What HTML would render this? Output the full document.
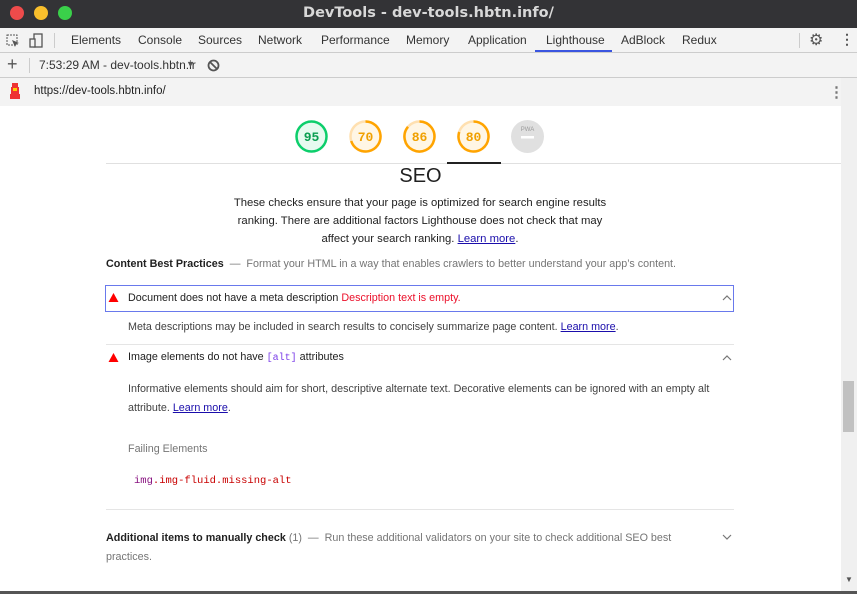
<!DOCTYPE html>
<html><head><style>
*{margin:0;padding:0;box-sizing:border-box}
body{width:857px;height:594px;overflow:hidden;font-family:"Liberation Sans",sans-serif;background:#fff;position:relative}
.title{position:absolute;left:0;top:0;width:857px;height:28px;background:#333336;color:#d8d8d8;font-family:"DejaVu Sans",sans-serif;font-weight:bold;font-size:14.5px;text-align:center;line-height:27px}
.dot{position:absolute;top:6px;width:14px;height:14px;border-radius:50%}
.tabs{position:absolute;top:28px;left:0;width:857px;height:25px;background:#f3f3f3;border-bottom:1px solid #ccc;font-family:"Liberation Sans",sans-serif;font-size:12px;color:#333}
.tabs span{position:absolute;top:5px}
.bar2{position:absolute;top:53px;left:0;width:857px;height:25px;background:#f3f3f3;border-bottom:1px solid #ccc;font-family:"Liberation Sans",sans-serif;font-size:12px;color:#333}
.bar3{position:absolute;top:78px;left:0;width:841px;height:28px;background:#f3f3f3;font-size:12px;color:#222}
.scroll{position:absolute;left:841px;top:78px;width:16px;height:513px;background:#f0f0f0}
.abs{position:absolute}
.g{position:absolute;top:120px;width:33px;height:33px}
.t{font-size:10.75px;color:#212121}
.m{font-family:"Liberation Mono",monospace}
a{color:#1a0dab;text-decoration:underline}
.gray{color:#757575}
.hr{position:absolute;left:106px;width:628px;height:1px;background:#e5e5e5}
</style></head><body>
<div class="title">DevTools - dev-tools.hbtn.info/</div>
<div class="dot" style="left:10px;background:#ee4b4b"></div>
<div class="dot" style="left:34px;background:#f9bf2c"></div>
<div class="dot" style="left:58px;background:#3ad04a"></div>
<div class="tabs">
<svg class="abs" style="left:6px;top:6px" width="14" height="14"><rect x="1" y="1" width="10" height="10" fill="none" stroke="#555" stroke-dasharray="2,1"/><path d="M6 6l7 3-3 1-1 3z" fill="#555"/></svg>
<svg class="abs" style="left:29px;top:5px" width="14" height="15"><rect x="5" y="1" width="8" height="13" fill="none" stroke="#555" stroke-width="1.3"/><rect x="1" y="6" width="5" height="8" fill="#f3f3f3" stroke="#555" stroke-width="1.3"/></svg>
<div class="abs" style="left:54px;top:5px;width:1px;height:15px;background:#ccc"></div>
<span style="left:71px">Elements</span><span style="left:138px">Console</span><span style="left:198px">Sources</span><span style="left:258px">Network</span><span style="left:321px">Performance</span><span style="left:406px">Memory</span><span style="left:468px">Application</span><span style="left:546px">Lighthouse</span><span style="left:621px">AdBlock</span><span style="left:682px">Redux</span>
<div class="abs" style="left:535px;top:22px;width:77px;height:2px;background:#3a55e0"></div>
<div class="abs" style="left:799px;top:5px;width:1px;height:15px;background:#ccc"></div>
<span style="left:809px;top:2px;font-size:16px;color:#555">⚙</span>
<span style="left:840px;top:3px;font-size:14px;color:#555;font-weight:bold">⋮</span>
</div>
<div class="bar2">
<span class="abs" style="left:7px;top:1px;font-size:18px;color:#555">+</span>
<div class="abs" style="left:29px;top:5px;width:1px;height:15px;background:#ccc"></div>
<span class="abs" style="left:39px;top:5px">7:53:29 AM - dev-tools.hbtn.ir</span>
<span class="abs" style="left:186px;top:6px;font-size:9px;color:#555">▼</span>
<svg class="abs" style="left:207px;top:6px" width="13" height="13"><circle cx="6.5" cy="6.5" r="5" fill="none" stroke="#555" stroke-width="1.8"/><path d="M3 3l7 7" stroke="#555" stroke-width="1.8"/></svg>
</div>
<div class="bar3">
<svg class="abs" style="left:9px;top:5px" width="12" height="17"><rect x="3" y="0" width="6" height="4" fill="#e33"/><rect x="2" y="4" width="8" height="7" fill="#e33"/><rect x="4" y="5" width="4" height="3" fill="#fc0"/><rect x="1" y="11" width="10" height="5" fill="#e33"/></svg>
<span class="abs" style="left:34px;top:7px;font-size:11.5px">https://dev-tools.hbtn.info/</span>
<span class="abs" style="left:829px;top:5px;font-size:15px;color:#777;font-weight:bold">⋮</span>
</div>
<div class="scroll"><div class="abs" style="left:2px;top:303px;width:11px;height:51px;background:#c1c1c1"></div><span class="abs" style="left:4px;top:497px;font-size:8px;color:#555">▼</span></div>
<div class="abs" style="left:0;top:591px;width:857px;height:3px;background:#555"></div>

<svg class="g" style="left:295px"><circle cx="16.5" cy="16.5" r="15" fill="#e6faef" stroke="#0cce6b" stroke-width="2.5"/><text x="16.5" y="21" text-anchor="middle" font-family="Liberation Mono" font-weight="bold" font-size="13" fill="#0a9e50">95</text></svg>
<svg class="g" style="left:349px"><circle cx="16.5" cy="16.5" r="15" fill="#fff6e5" stroke="#ffe0b0" stroke-width="2.5"/><path d="M16.5 1.5A15 15 0 1 1 2.2 21" fill="none" stroke="#ffa400" stroke-width="2.5"/><text x="16.5" y="21" text-anchor="middle" font-family="Liberation Mono" font-weight="bold" font-size="13" fill="#f0a000">70</text></svg>
<svg class="g" style="left:403px"><circle cx="16.5" cy="16.5" r="15" fill="#fff6e5" stroke="#ffe0b0" stroke-width="2.5"/><path d="M16.5 1.5A15 15 0 1 1 5 6.8" fill="none" stroke="#ffa400" stroke-width="2.5"/><text x="16.5" y="21" text-anchor="middle" font-family="Liberation Mono" font-weight="bold" font-size="13" fill="#f0a000">86</text></svg>
<svg class="g" style="left:457px"><circle cx="16.5" cy="16.5" r="15" fill="#fff6e5" stroke="#ffe0b0" stroke-width="2.5"/><path d="M16.5 1.5A15 15 0 1 1 2.2 12" fill="none" stroke="#ffa400" stroke-width="2.5"/><text x="16.5" y="21" text-anchor="middle" font-family="Liberation Mono" font-weight="bold" font-size="13" fill="#f0a000">80</text></svg>
<svg class="g" style="left:511px"><circle cx="16.5" cy="16.5" r="16.5" fill="#e0e0e0"/><text x="16.5" y="11" text-anchor="middle" font-size="6" fill="#999">PWA</text><rect x="10" y="16" width="13" height="2.5" fill="#fff"/></svg>
<div class="abs" style="left:106px;top:163px;width:735px;height:1px;background:#e0e0e0"></div>
<div class="abs" style="left:447px;top:162px;width:54px;height:2px;background:#212121"></div>

<div class="abs" style="left:0;top:165px;width:841px;text-align:center;font-size:20px;color:#212121">SEO</div>
<div class="abs t" style="left:230px;top:194px;width:380px;text-align:center;line-height:18px;font-size:11.3px">These checks ensure that your page is optimized for search engine results ranking. There are additional factors Lighthouse does not check that may affect your search ranking. <a>Learn more</a>.</div>

<div class="abs" style="left:106px;top:258px;font-size:10.75px"><b style="color:#212121">Content Best Practices</b> <span class="gray">&nbsp;— &nbsp;Format your HTML in a way that enables crawlers to better understand your app’s content.</span></div>

<div class="abs" style="left:105px;top:285px;width:629px;height:27px;border:1px solid #6979ec"></div>
<svg class="abs" style="left:108px;top:292px" width="11" height="11"><path d="M5.5 1L10.5 10H.5z" fill="#f00"/></svg>
<div class="abs t" style="left:128px;top:292px">Document does not have a meta description <span style="color:#eb0f29">Description text is empty.</span></div>
<svg class="abs" style="left:722px;top:295px" width="10" height="6"><path d="M1 5l4-4 4 4" fill="none" stroke="#777" stroke-width="1.2"/></svg>
<div class="abs t" style="left:128px;top:321px;color:#424242">Meta descriptions may be included in search results to concisely summarize page content. <a>Learn more</a>.</div>
<div class="hr" style="top:344px"></div>
<svg class="abs" style="left:108px;top:352px" width="11" height="11"><path d="M5.5 1L10.5 10H.5z" fill="#f00"/></svg>
<div class="abs t" style="left:128px;top:351px">Image elements do not have <span class="m" style="color:#7b3ee8;font-size:10px">[alt]</span> attributes</div>
<svg class="abs" style="left:722px;top:355px" width="10" height="6"><path d="M1 5l4-4 4 4" fill="none" stroke="#777" stroke-width="1.2"/></svg>
<div class="abs" style="left:128px;top:380px;width:600px;font-size:10.75px;line-height:19px;color:#424242">Informative elements should aim for short, descriptive alternate text. Decorative elements can be ignored with an empty alt attribute. <a>Learn more</a>.</div>
<div class="abs gray" style="left:128px;top:443px;font-size:10.75px">Failing Elements</div>
<div class="abs m" style="left:134px;top:475px;font-size:10.5px"><span style="color:#881280">img</span><span style="color:#c80000">.img-fluid.missing-alt</span></div>
<div class="hr" style="top:509px"></div>
<div class="abs" style="left:106px;top:529px;width:600px;font-size:10.75px;line-height:19px"><b style="color:#212121">Additional items to manually check</b> <span class="gray">(1) &nbsp;— &nbsp;Run these additional validators on your site to check additional SEO best practices.</span></div>
<svg class="abs" style="left:722px;top:534px" width="10" height="6"><path d="M1 1l4 4 4-4" fill="none" stroke="#777" stroke-width="1.2"/></svg>
</body></html>
